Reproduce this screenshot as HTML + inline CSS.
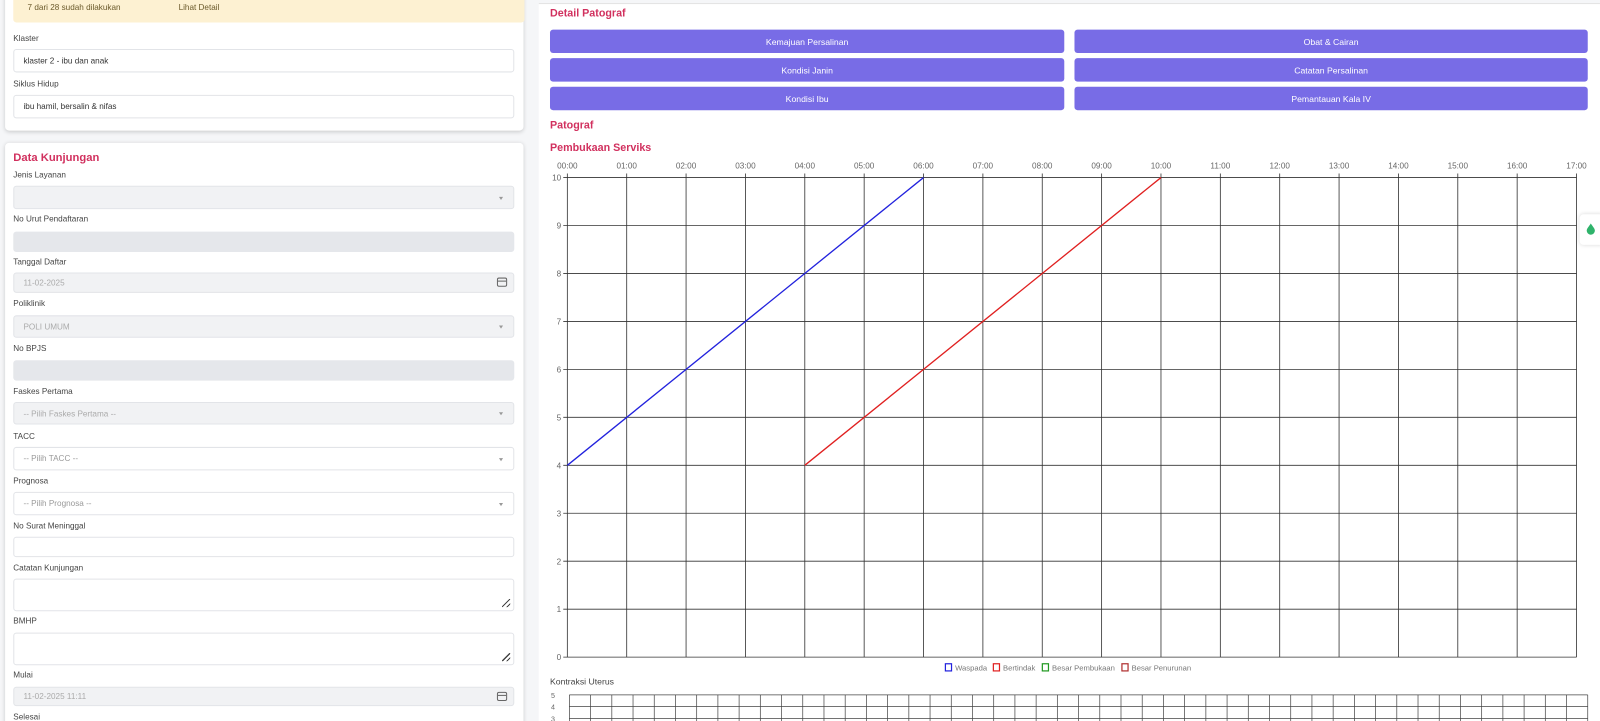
<!DOCTYPE html>
<html><head><meta charset="utf-8">
<style>
*{box-sizing:border-box;margin:0;padding:0}
html,body{width:1600px;height:721px;overflow:hidden}
body{background:#f5f6f8;font-family:"Liberation Sans",sans-serif;font-size:8px;color:#333;position:relative}
#w{position:absolute;left:0;top:0;width:1568px;height:707px;transform:scale(1.0204);transform-origin:0 0}
.a{position:absolute}
.card{position:absolute;background:#fff;border-radius:4px;box-shadow:0 1px 4px rgba(0,0,0,.18)}
.lbl{position:absolute;left:13px;font-size:8px;color:#444}
.in{position:absolute;left:13px;width:491px;border:1px solid #e2e4e8;border-radius:3px;background:#fff;font-size:8px;color:#333;padding-left:9px;display:flex;align-items:center}
.dis{background:#f1f2f4;color:#aaa}
.dark{background:#e5e7eb;border-color:#e5e7eb}
.caret{position:absolute;right:10px;top:50%;margin-top:-1px;border:2.5px solid transparent;border-top:3px solid #999}
.cal{position:absolute;right:6px;top:50%;margin-top:-5px;width:10px;height:9px;border:1px solid #666;border-radius:2px}
.cal:before{content:"";position:absolute;left:0;right:0;top:2px;border-top:1px solid #666}
.rs{position:absolute;right:3px;bottom:3px;width:8px;height:8px;background:linear-gradient(135deg,transparent 45%,#444 45%,#444 55%,transparent 55%,transparent 75%,#444 75%,#444 85%,transparent 85%)}
.btn{position:absolute;height:23px;background:#786ce6;border-radius:3px;color:#fff;font-size:8.5px;display:flex;align-items:center;justify-content:center}
.h{position:absolute;color:#d1305e;font-weight:bold;font-size:10.5px}
</style></head><body><div id="w">
<div class="card" style="left:5px;top:-10px;width:508px;height:138px"></div>
<div class="a" style="left:13px;top:0;width:501px;height:22px;background:#fdf1d2;border-radius:0 0 3px 3px;font-size:8px;color:#6b5a2b"><span class="a" style="left:14px;top:3px">7 dari 28 sudah dilakukan</span><span class="a" style="left:162px;top:3px">Lihat Detail</span></div>
<div class="lbl" style="top:33px">Klaster</div>
<div class="in" style="top:48px;height:23px">klaster 2 - ibu dan anak</div>
<div class="lbl" style="top:78px">Siklus Hidup</div>
<div class="in" style="top:93px;height:23px">ibu hamil, bersalin &amp; nifas</div>

<div class="card" style="left:5px;top:140px;width:508px;height:600px"></div>
<div class="h" style="left:13px;top:149px;font-size:11px">Data Kunjungan</div>
<div class="lbl" style="top:167px">Jenis Layanan</div>
<div class="in dis" style="top:182px;height:23px"><span class="caret"></span></div>
<div class="lbl" style="top:210px">No Urut Pendaftaran</div>
<div class="in dark" style="top:227px;height:20px"></div>
<div class="lbl" style="top:252px">Tanggal Daftar</div>
<div class="in dis" style="top:267px;height:20px">11-02-2025<span class="cal"></span></div>
<div class="lbl" style="top:293px">Poliklinik</div>
<div class="in dis" style="top:309px;height:22px">POLI UMUM<span class="caret"></span></div>
<div class="lbl" style="top:337px">No BPJS</div>
<div class="in dark" style="top:353px;height:20px"></div>
<div class="lbl" style="top:379px">Faskes Pertama</div>
<div class="in dis" style="top:394px;height:22px">-- Pilih Faskes Pertama --<span class="caret"></span></div>
<div class="lbl" style="top:423px">TACC</div>
<div class="in" style="top:438px;height:23px;color:#999">-- Pilih TACC --<span class="caret"></span></div>
<div class="lbl" style="top:467px">Prognosa</div>
<div class="in" style="top:482px;height:23px;color:#999">-- Pilih Prognosa --<span class="caret"></span></div>
<div class="lbl" style="top:511px">No Surat Meninggal</div>
<div class="in" style="top:526px;height:20px"></div>
<div class="lbl" style="top:552px">Catatan Kunjungan</div>
<div class="in" style="top:567px;height:32px"><span class="rs"></span></div>
<div class="lbl" style="top:604px">BMHP</div>
<div class="in" style="top:620px;height:32px"><span class="rs"></span></div>
<div class="lbl" style="top:657px">Mulai</div>
<div class="in dis" style="top:673px;height:19px">11-02-2025 11:11<span class="cal"></span></div>
<div class="lbl" style="top:698px">Selesai</div>

<div class="a" style="left:528px;top:3px;width:1040px;height:718px;background:#fff;border-top:1px solid #e3e3e3"></div>
<div class="h" style="left:539px;top:7px">Detail Patograf</div>
<div class="btn" style="left:539px;top:29px;width:504px">Kemajuan Persalinan</div>
<div class="btn" style="left:1053px;top:29px;width:503px">Obat &amp; Cairan</div>
<div class="btn" style="left:539px;top:57px;width:504px">Kondisi Janin</div>
<div class="btn" style="left:1053px;top:57px;width:503px">Catatan Persalinan</div>
<div class="btn" style="left:539px;top:85px;width:504px">Kondisi Ibu</div>
<div class="btn" style="left:1053px;top:85px;width:503px">Pemantauan Kala IV</div>
<div class="h" style="left:539px;top:117px">Patograf</div>
<div class="h" style="left:539px;top:139px">Pembukaan Serviks</div>

<svg class="a" style="left:0;top:0" width="1568" height="707" font-family="Liberation Sans,sans-serif" font-size="8" fill="#666">
<g id="g"></g>
</svg>

<div class="a" style="left:1548px;top:210px;width:22px;height:30px;background:#fff;box-shadow:0 0 4px rgba(0,0,0,.15);border-radius:4px 0 0 4px"><svg width="22" height="30"><path d="M11 9 C9 12 7 14 7 16 a4 4 0 0 0 8 0 C15 14 13 12 11 9Z" fill="#2fb36b"/></svg></div>
</div>
<script>
var s=document.getElementById('g'),h='';
var x0=556,dx=(1545-556)/17,y0=174,dy=47;
for(var i=0;i<=17;i++){var x=x0+i*dx;h+='<line x1="'+x+'" y1="'+(y0-4)+'" x2="'+x+'" y2="644" stroke="#333" stroke-width="0.8"/>';
h+='<text x="'+x+'" y="165" text-anchor="middle">'+(i<10?'0':'')+i+':00</text>';}
for(var j=0;j<=10;j++){var y=y0+j*dy;h+='<line x1="'+(x0-4)+'" y1="'+y+'" x2="1545" y2="'+y+'" stroke="#333" stroke-width="0.8"/>';
h+='<text x="'+(x0-6)+'" y="'+(y+3)+'" text-anchor="end">'+(10-j)+'</text>';}
h+='<line x1="'+x0+'" y1="456" x2="'+(x0+6*dx)+'" y2="174" stroke="#2222dd" stroke-width="1.3"/>';
h+='<line x1="'+(x0+4*dx)+'" y1="456" x2="'+(x0+10*dx)+'" y2="174" stroke="#e02020" stroke-width="1.3"/>';
var lg=[['Waspada','#2222dd',926],['Bertindak','#e02020',973],['Besar Pembukaan','#229922',1021],['Besar Penurunan','#b03030',1099]];
lg.forEach(function(l){h+='<rect x="'+(l[2]+0.5)+'" y="650.5" width="6" height="7" fill="none" stroke="'+l[1]+'" stroke-width="1.2"/><text x="'+(l[2]+10)+'" y="657" fill="#777" font-size="7.5">'+l[0]+'</text>';});
h+='<text x="539" y="671" fill="#444" font-size="8.5">Kontraksi Uterus</text>';
var gx0=558,gx1=1556,cw=(gx1-gx0)/48;
for(var k=0;k<=48;k++){var x=gx0+k*cw;h+='<line x1="'+x+'" y1="681" x2="'+x+'" y2="721" stroke="#444" stroke-width="0.7"/>';}
for(var r=0;r<4;r++){var y=681+r*11.5;h+='<line x1="'+gx0+'" y1="'+y+'" x2="'+gx1+'" y2="'+y+'" stroke="#444" stroke-width="0.7"/>';h+='<text x="540" y="'+(y+3)+'" font-size="7">'+(5-r)+'</text>';}
s.innerHTML=h;
</script>
</body></html>
